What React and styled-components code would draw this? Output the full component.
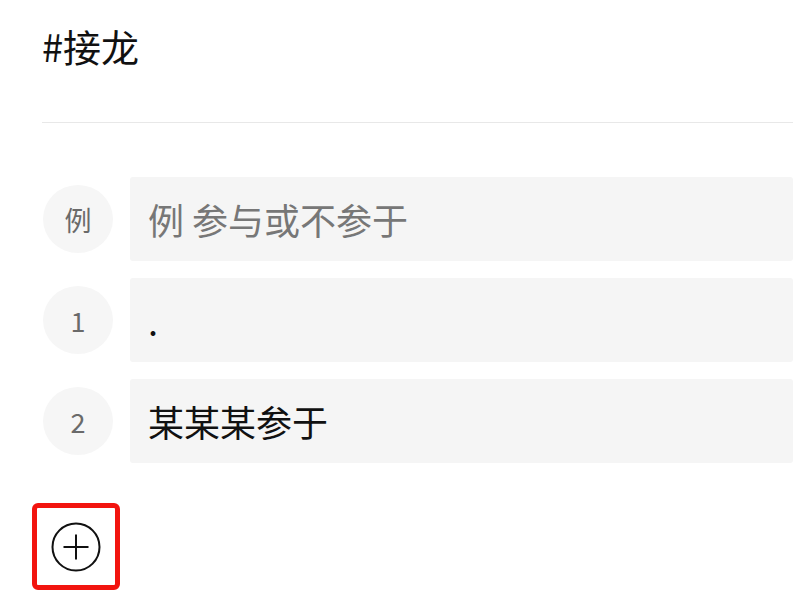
import React from 'react'
import styled, { createGlobalStyle } from 'styled-components'

const GlobalStyle = createGlobalStyle`
    body {
        margin: 0;
        background: #ffffff;
        font-family: "Noto Sans CJK SC", "Noto Sans", sans-serif;
    }
`

const entries = [
    { label: '例', text: '例 参与或不参于', hint: true },
    { label: '1', text: '.' },
    { label: '2', text: '某某某参于' },
]

export default function App() {
    return (
        <>
            <GlobalStyle />
            <Page>
                <Header>
                    <h1>#接龙</h1>
                </Header>
                <List>
                    {entries.map((entry, index) => (
                        <Row key={index}>
                            <Badge>{entry.label}</Badge>
                            <Field hint={entry.hint ? 1 : 0}>{entry.text}</Field>
                        </Row>
                    ))}
                </List>
                <AddButton>
                    <svg width="50" height="50" viewBox="0 0 50 50">
                        <circle cx="25" cy="25" r="23.5" fill="none" stroke="#111" strokeWidth="2" />
                        <path d="M25 12.5v25M12.5 25h25" stroke="#111" strokeWidth="2" />
                    </svg>
                </AddButton>
            </Page>
        </>
    )
}

const Page = styled.div`
    width: 800px;
    height: 600px;
    padding: 0 7px 0 42px;
    box-sizing: border-box;
    overflow: hidden;
`

const Header = styled.div`
    height: 123px;
    border-bottom: 1px solid #e8e8e8;
    box-sizing: border-box;
    padding-top: 22px;

    h1 {
        margin: 0;
        font-size: 38px;
        line-height: 48px;
        font-weight: 400;
        color: #111;
    }
`

const List = styled.div`
    display: flex;
    flex-direction: column;
    gap: 17px;
    margin-top: 54px;
`

const Row = styled.div`
    display: flex;
    align-items: center;
`

const Badge = styled.div`
    width: 70px;
    height: 68px;
    margin-left: 1px;
    margin-right: 17px;
    border-radius: 50%;
    background: #f6f6f6;
    color: #6a6a6a;
    font-size: 27px;
    display: flex;
    align-items: center;
    justify-content: center;
    flex-shrink: 0;
`

const Field = styled.div`
    flex: 1;
    height: 84px;
    background: #f5f5f5;
    border-radius: 3px;
    padding-left: 18px;
    display: flex;
    align-items: center;
    font-size: 36px;
    color: ${props => props.hint ? '#777777' : '#111111'};
`

const AddButton = styled.div`
    width: 88px;
    height: 87px;
    margin: 40px 0 0 -10px;
    border: 5px solid #f2140f;
    border-radius: 6px;
    box-sizing: border-box;
    display: flex;
    align-items: center;
    justify-content: center;
`
